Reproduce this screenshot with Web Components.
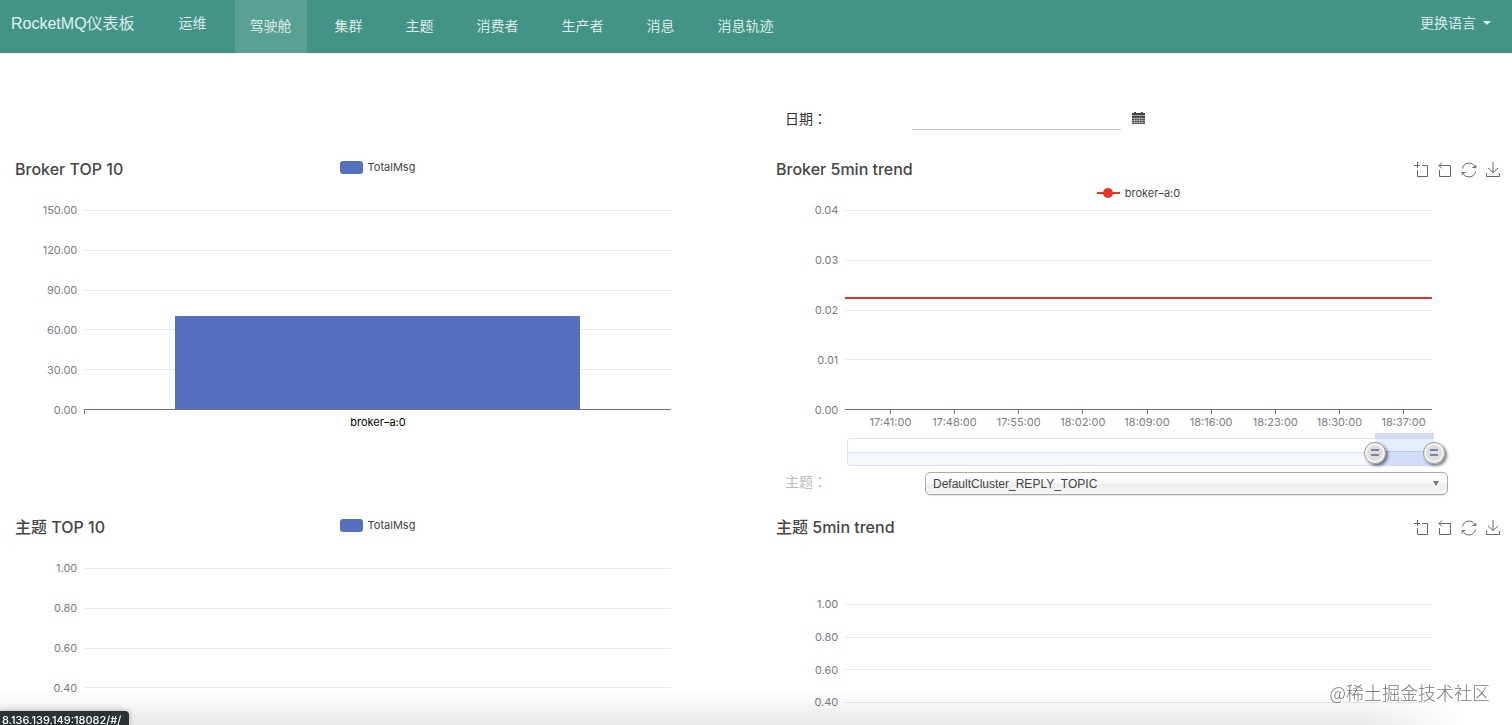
<!DOCTYPE html>
<html lang="zh-CN">
<head>
<meta charset="utf-8">
<title>RocketMQ仪表板</title>
<style>
  body { margin: 0; font: 14px/20px "Liberation Sans", "Noto Sans CJK SC", sans-serif; color: #333; background: #fff; }
</style>
</head>
<body>
<mq-app></mq-app>
<script>
const define = (name, html, setup) => {
  const template = document.createElement('template');
  template.innerHTML = html;
  customElements.define(name, class extends HTMLElement {
    connectedCallback() {
      if (this.shadowRoot) return;
      this.attachShadow({ mode: 'open' }).append(template.content.cloneNode(true));
      if (setup) setup(this, this.shadowRoot);
    }
  });
};

/* One entry of the navigation bar */
define('mq-nav-link', `
<style>
  :host { display: flex; }
  a { display: flex; align-items: center; padding: 0 15px 2px; color: #e4f3f1; text-decoration: none; }
  :host(.first) a { padding-bottom: 7px; }
  :host(.active) a { background: #589f94; }
</style>
<a href="#/"><slot></slot></a>`);

define('mq-navbar', `
<style>
  :host { display: block; background: #429487; color: #e4f3f1; font-weight: 350; }
  header { display: flex; height: 53px; }
  .brand { display: flex; align-items: center; padding: 0 29px 6px 11px; font-size: 16px; color: inherit; text-decoration: none; }
  nav { display: flex; gap: 13px; flex: 1; }
  button { display: flex; align-items: center; gap: 7px; padding: 0 21px 7px; border: 0; background: none; font: inherit; color: inherit; }
  .caret { border: 4px solid transparent; border-top-color: currentColor; border-bottom: 0; }
</style>
<header>
  <a class="brand" href="#/">RocketMQ仪表板</a>
  <nav>
    <mq-nav-link class="first">运维</mq-nav-link>
    <mq-nav-link class="active">驾驶舱</mq-nav-link>
    <mq-nav-link>集群</mq-nav-link>
    <mq-nav-link>主题</mq-nav-link>
    <mq-nav-link>消费者</mq-nav-link>
    <mq-nav-link>生产者</mq-nav-link>
    <mq-nav-link>消息</mq-nav-link>
    <mq-nav-link>消息轨迹</mq-nav-link>
  </nav>
  <button type="button">更换语言<span class="caret"></span></button>
</header>`);

define('mq-date-field', `
<style>
  :host { display: flex; align-items: flex-end; padding: 0 13px; }
  label { width: 127px; padding-bottom: 1px; }
  label span { font-family: "Noto Sans CJK TC", sans-serif; }
  input { box-sizing: border-box; width: 209px; height: 30px; padding: 0; border: 0; border-bottom: 1px solid #ccc; background: none; font: inherit; outline: 0; }
  button { display: flex; margin: 0 0 5px 11px; padding: 0; border: 0; background: none; color: #444; }
</style>
<label for="date">日期<span lang="zh-TW">：</span></label>
<input id="date" type="text">
<button type="button" aria-label="日期">
  <svg width="13" height="14" viewBox="0 0 13 14">
    <path fill="currentColor" d="M0 2h2V1h2v1h5V1h2v1h2v3H0z"/>
    <path fill="#aaa" d="M0 4h13v1H0z"/>
    <path fill="currentColor" d="M0 5h13v8H0z"/>
    <path stroke="#bbb" stroke-width=".7" d="M0 7.5h13M0 9.5h13M0 11.5h13M2.5 6v7M5 6v7M7.5 6v7M10 6v7"/>
  </svg>
</button>`);

define('mq-topic-field', `
<style>
  :host { display: flex; align-items: center; padding: 0 57px 0 13px; }
  label { width: 140px; color: #bbb; padding-bottom: 4px; }
  label span { font-family: "Noto Sans CJK TC", sans-serif; }
  .box { display: grid; flex: 1; align-items: center; }
  select, i { grid-area: 1 / 1; }
  select { appearance: none; height: 23px; padding: 0 7px; border: 1px solid #aaa; border-radius: 5px; color: #444; font: 12px/20px "Liberation Sans", sans-serif;
    background: linear-gradient(#fff 20%, #f6f6f6 50%, #eee 52%, #f4f4f4); box-shadow: 0 1px 1px rgba(0,0,0,.1); }
  i { justify-self: end; margin-right: 9px; border: 3px solid transparent; border-top: 5px solid #777; border-bottom: 0; pointer-events: none; }
</style>
<label for="topic">主题<span lang="zh-TW">：</span></label>
<div class="box">
  <select id="topic"><option>DefaultCluster_REPLY_TOPIC</option></select><i></i>
</div>`);

/* Toolbox: area zoom, zoom reset, refresh, save */
define('mq-toolbox', `
<style>
  :host { display: flex; gap: 8px; padding-top: 5px; }
  button { display: flex; padding: 0; border: 0; background: none; color: #666; }
  svg { fill: none; stroke: currentColor; stroke-width: 1; }
</style>
<button type="button" aria-label="zoom"><svg width="16" height="16"><path d="M4.500 0v6M1 3.500h6M9 3.500h5.500v11h-10V8"/></svg></button>
<button type="button" aria-label="restore zoom"><svg width="16" height="16"><path d="M5 .5l-3 3 3 3M2 3.500h11.500v11h-11V8"/></svg></button>
<button type="button" aria-label="refresh"><svg width="16" height="16"><path d="M1.500 6.500A6.600 6.600 0 0 1 14 5M14.500 9.500A6.600 6.600 0 0 1 2 11M11.500 5.500h3.500l-.2-2.500M4.500 10.500H1l.2 2.700"/></svg></button>
<button type="button" aria-label="save"><svg width="16" height="16"><path d="M8 0v10.500M3 6l5 4.500L13 6M1.500 11v3.500h13V11"/></svg></button>`);

/* Two-handled range below a time axis */
define('mq-zoom-range', `
<style>
  :host { display: grid; height: 28px; --low: 90; --high: 100; }
  .track, .window, input { grid-area: 1 / 1; }
  .track { border: 1px solid #d9e0ee; border-radius: 3px; background: linear-gradient(#fff 13px, #dbe2f1 13px 14px, #f5f8fd 14px); }
  .window { margin: -5px calc((100 - var(--high)) * 1%) 0 calc(var(--low) * 1%);
    background: linear-gradient(#d3dcf0 6px, #e5eefd 6px 18px, #b8c7ea 18px 19px, #cfdcfa 19px); }
  input { appearance: none; margin: 1px -11px 0; background: none; pointer-events: none; z-index: 1; }
  input::-webkit-slider-thumb { appearance: none; box-sizing: border-box; width: 22px; height: 22px; border: 1px solid #999; border-radius: 50%; pointer-events: auto;
    background:
      linear-gradient(#7b8299, #7b8299) 6px 6px / 8px 2px no-repeat,
      linear-gradient(#7b8299, #7b8299) 6px 11px / 8px 2px no-repeat,
      radial-gradient(#ddd 50%, #f8f8f8 64%);
    box-shadow: 2px 2px 3px rgba(0,0,0,.5); }
</style>
<div class="track"></div><div class="window"></div>
<input type="range" aria-label="start" value="90">
<input type="range" aria-label="end" value="100">`, (host, root) => {
  const [low, high] = root.querySelectorAll('input');
  low.oninput = () => host.style.setProperty('--low', low.value);
  high.oninput = () => host.style.setProperty('--high', high.value);
});

/* Chart frame: title, legend, tools, value axis, and plot content passed in slots */
define('mq-chart', `
<style>
  :host { display: block; color: #7b7d84; font: 11px/16px Inter, sans-serif; }
  .head { display: grid; grid-template: 24px 1fr / 1fr auto 1fr; height: var(--head, 53px); padding: 0 4px; }
  h2 { margin: 0; font: 500 16px/24px Inter, "Noto Sans CJK SC", sans-serif; color: #464646; white-space: nowrap; }
  .legend { display: flex; align-items: center; gap: 5px; grid-column: 2; height: 20px; color: #444; }
  .legend:empty { display: none; }
  :host([marker="line"]) .legend { grid-row: 2; height: 24px; }
  .swatch { width: 23px; height: 13px; border-radius: 3px; background: #5470bf; }
  ::slotted([slot="tools"]) { grid-area: 1 / 3; justify-self: end; }
  .plot { display: grid; grid-template-columns: 10% 1fr 10%; height: var(--plot, 200px); }
  .values, .lines { display: flex; flex-direction: column; justify-content: space-between; }
  .values { margin: -8px 7px -8px 0; text-align: right; }
  .lines, .data { grid-area: 1 / 2; }
  .lines hr { margin: 0; border: 0; height: 1px; width: 100%; background: #e8e9ec; }
  .lines hr:last-child { background: #6e7079; }
  .data { display: grid; }
  .foot { margin: 0 10%; }
</style>
<div class="head">
  <h2></h2><div class="legend"></div><slot name="tools"></slot>
</div>
<div class="plot">
  <div class="values"></div>
  <div class="lines"></div>
  <div class="data"><slot name="data"></slot></div>
</div>
<div class="foot"><slot name="axis"></slot></div>`, (host, root) => {
  root.querySelector('h2').textContent = host.getAttribute('heading');
  const series = host.getAttribute('series');
  if (series) {
    const swatch = host.getAttribute('marker') === 'line'
      ? '<svg width="23" height="12"><path d="M0 6h23" stroke="#ea3323" stroke-width="2"/><circle cx="11" cy="6" r="5" fill="#ea3323"/></svg>'
      : '<span class="swatch"></span>';
    root.querySelector('.legend').innerHTML = swatch + '<span>' + series + '</span>';
  }
  for (const value of host.getAttribute('values').split(' ')) {
    const label = document.createElement('span');
    label.textContent = value;
    root.querySelector('.values').append(label);
    root.querySelector('.lines').append(document.createElement('hr'));
  }
});

define('mq-bar', `
<style>
  :host { display: grid; align-items: end; justify-items: center; padding-bottom: 1px; }
  div { width: 69%; height: 93px; background: #5470bf; }
</style>
<div></div>`);

define('mq-line', `
<style>
  :host { display: flex; flex-direction: column; }
  i { flex: 87; } b { flex: none; height: 2px; background: #d9372c; } u { flex: 111; }
</style>
<i></i><b></b><u></u>`);

define('mq-category-axis', `
<style>
  :host { display: block; border-left: 1px solid #6e7079; height: 5px; margin-top: -1px; color: #000; text-align: center; }
  span { display: block; padding-top: 5px; }
</style>
<span><slot></slot></span>`);

define('mq-time-axis', `
<style>
  :host { display: flex; margin: 0 -4px 8px 13px; }
  span { flex: 1; display: flex; flex-direction: column; align-items: center; }
  span::before { content: ""; width: 1px; height: 4px; background: #6e7079; }
</style>`, (host, root) => {
  for (const time of ['17:41:00', '17:48:00', '17:55:00', '18:02:00', '18:09:00', '18:16:00', '18:23:00', '18:30:00', '18:37:00']) {
    const label = document.createElement('span');
    label.textContent = time;
    root.append(label);
  }
});

define('mq-dashboard', `
<style>
  :host { display: grid; grid-template: 77px 342px 23px auto / 1fr 1fr; column-gap: 28px; padding: 0 7px 0 11px; }
  mq-date-field { grid-area: 1 / 2; }
  mq-chart { grid-column: 1; }
  mq-chart.trend { grid-column: 2; }
  .brokers { grid-row: 2; margin-top: 27px; }
  mq-topic-field { grid-area: 3 / 2; }
  .topics { grid-row: 4; margin-top: 20px; }
  mq-chart.trend.topics { --head: 89px; --plot: 164px; }
  mq-zoom-range { margin: 0 -2px 0 2px; }
</style>
<mq-date-field></mq-date-field>
<mq-chart class="brokers" heading="Broker TOP 10" series="TotalMsg" values="150.00 120.00 90.00 60.00 30.00 0.00">
  <mq-bar slot="data"></mq-bar>
  <mq-category-axis slot="axis">broker–a:0</mq-category-axis>
</mq-chart>
<mq-chart class="brokers trend" heading="Broker 5min trend" series="broker–a:0" marker="line" values="0.04 0.03 0.02 0.01 0.00">
  <mq-toolbox slot="tools"></mq-toolbox>
  <mq-line slot="data"></mq-line>
  <div slot="axis"><mq-time-axis></mq-time-axis><mq-zoom-range></mq-zoom-range></div>
</mq-chart>
<mq-topic-field></mq-topic-field>
<mq-chart class="topics" heading="主题 TOP 10" series="TotalMsg" values="1.00 0.80 0.60 0.40 0.20 0.00"></mq-chart>
<mq-chart class="topics trend" heading="主题 5min trend" values="1.00 0.80 0.60 0.40 0.20 0.00">
  <mq-toolbox slot="tools"></mq-toolbox>
</mq-chart>`);

/* What floats over the bottom of the window: shade, link address, watermark */
define('mq-overlay', `
<style>
  :host { position: fixed; inset: auto 0 0 0; height: 46px; display: flex; align-items: flex-end; justify-content: space-between; pointer-events: none; }
  .shade { position: absolute; inset: 12px 0 0 0; background: linear-gradient(transparent, rgba(0,0,0,.09)); mask-image: linear-gradient(90deg, #000 90%, transparent 97%); }
  .status, .mark { position: relative; }
  .status { height: 14px; padding: 0 8px 0 2px; border-radius: 0 4px 0 0; background: #2a3436; color: #fff; font: 500 11px/18px Inter, sans-serif; box-shadow: 0 0 6px rgba(0,0,0,.3); }
  .mark { align-self: flex-start; padding-right: 22px; font: 300 18px/26px "Noto Sans CJK SC", sans-serif; color: #777; text-shadow: 1px 1px 1px #fff, -1px -1px 1px #fff; }
</style>
<div class="shade"></div>
<div class="status">8.136.139.149:18082/#/</div>
<div class="mark">@稀土掘金技术社区</div>`);

define('mq-app', `
<style>
  :host { display: flex; flex-direction: column; height: 100vh; }
  main { flex: 1; min-height: 0; overflow: auto; scrollbar-width: none; }
</style>
<mq-navbar></mq-navbar>
<main><mq-dashboard></mq-dashboard></main>
<mq-overlay></mq-overlay>`);
</script>
</body>
</html>
